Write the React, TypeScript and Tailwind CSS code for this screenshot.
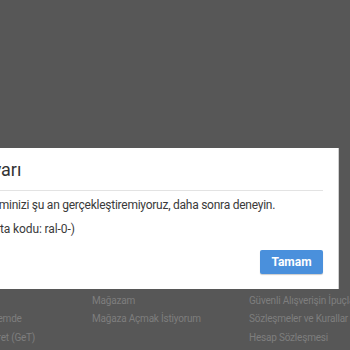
import React from 'react'

const columns = [
  { title: 'Hakkımızda', items: ['Kurumsal', 'Basında Gündemde', 'Güvenli e-Ticaret (GeT)'] },
  { title: 'Mağaza', items: ['Mağazam', 'Mağaza Açmak İstiyorum'] },
  { title: 'Kurallar ve Yardım', items: ['Güvenli Alışverişin İpuçları', 'Sözleşmeler ve Kurallar', 'Hesap Sözleşmesi'] },
]

export default function App() {
  return (
    <div className="relative w-[350px] h-[350px] overflow-hidden bg-[#575757]">
      {/* footer under the overlay */}
      <div className="flex pt-[273px] ml-[-62px] text-[10px] tracking-[-0.2px] leading-[18.5px] font-['Roboto',sans-serif]">
        {columns.map((col, i) => (
          <div key={col.title} className={i === 0 ? 'w-[154px] shrink-0' : i === 1 ? 'w-[157px] shrink-0' : 'shrink-0'}>
            <div className="font-bold text-[#2e2e2e] whitespace-nowrap text-[11px]">{col.title}</div>
            {col.items.map((item) => (
              <div key={item} className="text-[#7e7e7e] whitespace-nowrap">
                {item}
              </div>
            ))}
          </div>
        ))}
      </div>

      {/* dialog */}
      <div className="absolute left-[-40px] top-[148px] w-[378px] bg-white pl-[21px] pr-[15px] pt-[10px] pb-[15px] font-['Roboto',sans-serif] shadow-[1px_0_0_#cfcfcf]">
        <h2 className="text-[18px] leading-6 text-[#333] pb-[8px] border-b border-[#e3e3e3]">Uyarı</h2>
        <p className="mt-[5px] text-[12px] tracking-[-0.25px] leading-[18px] text-[#3a3a3a] whitespace-nowrap">
          İşleminizi şu an gerçekleştiremiyoruz, daha sonra deneyin.
        </p>
        <p className="mt-[6px] text-[12px] tracking-[-0.1px] leading-[18px] text-[#3a3a3a]">(Hata kodu: ral-0-)</p>
        <div className="flex justify-end mt-[12px]">
          <button className="w-[63px] h-[24px] rounded-[2px] bg-[#4a90dc] text-white text-[12px] font-bold shadow-[0_1px_1px_rgba(0,0,0,0.2)]">
            Tamam
          </button>
        </div>
      </div>
    </div>
  )
}
